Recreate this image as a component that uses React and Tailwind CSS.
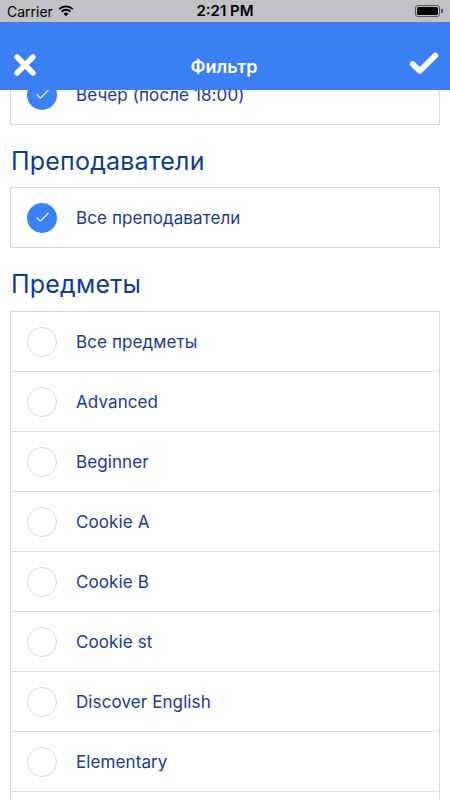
import { Check, X } from "lucide-react";

const subjects = [
  "Все предметы",
  "Advanced",
  "Beginner",
  "Cookie A",
  "Cookie B",
  "Cookie st",
  "Discover English",
  "Elementary",
  "Intermediate",
];

function Radio({ checked }) {
  if (checked) {
    return (
      <div className="w-[30px] h-[30px] rounded-full bg-[#3b82f2] flex items-center justify-center shrink-0">
        <Check size={17} strokeWidth={1.5} className="text-white" />
      </div>
    );
  }
  return <div className="w-[30px] h-[30px] rounded-full border border-[#d9d9d9] bg-white shrink-0" />;
}

function Row({ label, checked, divider }) {
  return (
    <div
      className={
        "flex items-center pl-[16px] " +
        (divider ? "h-[60px] border-b border-[#dcdcdc]" : "h-[59px]")
      }
    >
      <Radio checked={checked} />
      <span className="ml-[19px] mt-[3px] text-[17px] text-[#183a94] tracking-[0.1px]">{label}</span>
    </div>
  );
}

function Heading({ children, tall }) {
  return (
    <div className={(tall ? "h-[63px]" : "h-[62px]") + " pt-[21px] px-[1px]"}>
      <h2 className="text-[25px] leading-[30px] text-[#0c3c8f] tracking-[0.2px]">{children}</h2>
    </div>
  );
}

export default function App() {
  return (
    <div
      className="w-[450px] h-[800px] overflow-hidden bg-white flex flex-col"
      style={{ fontFamily: "Inter, 'Noto Sans', sans-serif" }}
    >
      <div className="h-[22px] bg-[#c2c1c6] flex items-center justify-between px-[7px] text-[14px] text-black shrink-0">
        <div className="flex items-center gap-[5px] w-[120px]">
          <span>Carrier</span>
          <svg width="16" height="12" viewBox="0 0 16 12">
            <path d="M8 11.5 L5.6 8.6 A3.4 3.4 0 0 1 10.4 8.6 Z" fill="black" />
            <path d="M3.6 6.6 A6.2 6.2 0 0 1 12.4 6.6" stroke="black" strokeWidth="1.8" fill="none" />
            <path d="M1.2 4.2 A9.6 9.6 0 0 1 14.8 4.2" stroke="black" strokeWidth="1.8" fill="none" />
          </svg>
        </div>
        <span className="font-semibold text-[15px]">2:21 PM</span>
        <div className="w-[120px] flex justify-end items-center">
          <div className="w-[25px] h-[12px] rounded-[3px] border border-[#555] p-[1px]">
            <div className="w-full h-full bg-black rounded-[1.5px]" />
          </div>
          <div className="w-[1.5px] h-[4px] bg-[#555] ml-[1px]" />
        </div>
      </div>

      <div className="relative z-10 h-[68px] bg-[#3a80f3] flex items-end justify-between px-[9px] pb-[9px] shrink-0">
        <X size={32} strokeWidth={4} className="text-white" />
        <span className="text-white text-[18px] font-semibold mb-[1px]">Фильтр</span>
        <Check size={34} strokeWidth={4} className="text-white" />
      </div>

      <div className="flex-1 overflow-hidden">
        <div className="-mt-[26px] px-[10px]">
          <div className="border border-[#d8d8d8]">
            <Row label="Вечер (после 18:00)" checked />
          </div>
          <Heading>Преподаватели</Heading>
          <div className="border border-[#d8d8d8]">
            <Row label="Все преподаватели" checked />
          </div>
          <Heading tall>Предметы</Heading>
          <div className="border border-[#d8d8d8]">
            {subjects.map((s) => (
              <Row key={s} label={s} divider />
            ))}
          </div>
        </div>
      </div>
    </div>
  );
}
